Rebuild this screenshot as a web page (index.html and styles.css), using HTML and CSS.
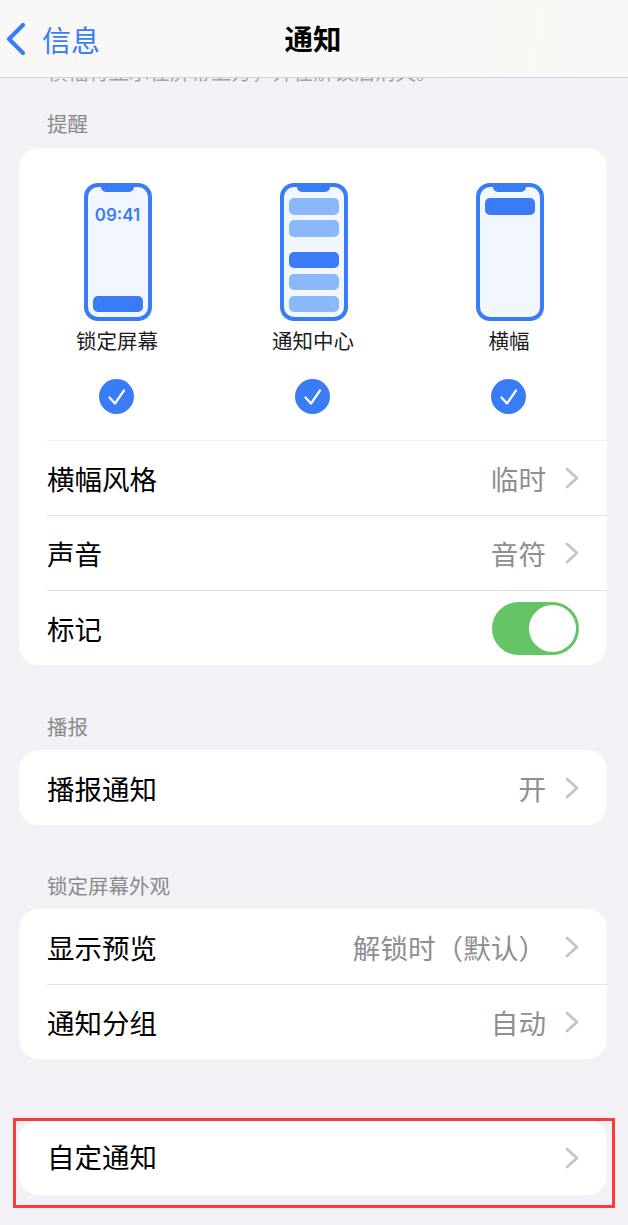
FILE: index.html
```html
<!DOCTYPE html>
<html lang="zh-CN">
<head>
    <meta charset="UTF-8">
    <meta name="viewport" content="width=device-width, initial-scale=1.0">
    <title>通知</title>
    <link rel="stylesheet" href="styles.css">
</head>
<body>
    <div class="screen">
        <header class="nav">
            <a class="nav-back">
                <svg class="back-icon" width="22" height="34" viewBox="0 0 22 34"><path d="M18 3 L4 17 L18 31" fill="none" stroke="#3a7cf6" stroke-width="4.2" stroke-linecap="round" stroke-linejoin="round"/></svg>
                <span>信息</span>
            </a>
            <h1>通知</h1>
        </header>
        <div class="clipped-note"><p>横幅将显示在屏幕上方，并在解锁后消失。</p></div>

        <h2 class="section-title first">提醒</h2>
        <section class="card">
            <div class="styles">
                <div class="style-item">
                    <div class="phone">
                        <span class="notch"></span>
                        <span class="clock">09:41</span>
                        <span class="bar bar-dark bar-bottom"></span>
                    </div>
                    <span class="style-name">锁定屏幕</span>
                    <span class="check"><svg width="20" height="18" viewBox="0 0 20 18"><path d="M2.5 9.5 L8 15.5 L17 2.5" fill="none" stroke="#fff" stroke-width="2.2" stroke-linecap="round" stroke-linejoin="round"/></svg></span>
                </div>
                <div class="style-item">
                    <div class="phone phone-list">
                        <span class="notch"></span>
                        <span class="bar bar-light"></span>
                        <span class="bar bar-light"></span>
                        <span class="bar bar-dark bar-gap"></span>
                        <span class="bar bar-light"></span>
                        <span class="bar bar-light"></span>
                    </div>
                    <span class="style-name">通知中心</span>
                    <span class="check"><svg width="20" height="18" viewBox="0 0 20 18"><path d="M2.5 9.5 L8 15.5 L17 2.5" fill="none" stroke="#fff" stroke-width="2.2" stroke-linecap="round" stroke-linejoin="round"/></svg></span>
                </div>
                <div class="style-item">
                    <div class="phone phone-list">
                        <span class="notch"></span>
                        <span class="bar bar-dark"></span>
                    </div>
                    <span class="style-name">横幅</span>
                    <span class="check"><svg width="20" height="18" viewBox="0 0 20 18"><path d="M2.5 9.5 L8 15.5 L17 2.5" fill="none" stroke="#fff" stroke-width="2.2" stroke-linecap="round" stroke-linejoin="round"/></svg></span>
                </div>
            </div>
            <div class="row row-soft">
                <span class="row-label">横幅风格</span>
                <span class="row-value">临时</span>
                <svg class="chevron" width="14" height="22" viewBox="0 0 14 22"><path d="M2 2 L12 11 L2 20" fill="none" stroke="#c4c4c7" stroke-width="2.8" stroke-linecap="round" stroke-linejoin="round"/></svg>
            </div>
            <div class="row">
                <span class="row-label">声音</span>
                <span class="row-value">音符</span>
                <svg class="chevron" width="14" height="22" viewBox="0 0 14 22"><path d="M2 2 L12 11 L2 20" fill="none" stroke="#c4c4c7" stroke-width="2.8" stroke-linecap="round" stroke-linejoin="round"/></svg>
            </div>
            <div class="row">
                <span class="row-label">标记</span>
                <span class="toggle"><span class="knob"></span></span>
            </div>
        </section>

        <h2 class="section-title">播报</h2>
        <section class="card">
            <div class="row row-plain">
                <span class="row-label">播报通知</span>
                <span class="row-value">开</span>
                <svg class="chevron" width="14" height="22" viewBox="0 0 14 22"><path d="M2 2 L12 11 L2 20" fill="none" stroke="#c4c4c7" stroke-width="2.8" stroke-linecap="round" stroke-linejoin="round"/></svg>
            </div>
        </section>

        <h2 class="section-title tight">锁定屏幕外观</h2>
        <section class="card">
            <div class="row row-plain">
                <span class="row-label">显示预览</span>
                <span class="row-value">解锁时（默认）</span>
                <svg class="chevron" width="14" height="22" viewBox="0 0 14 22"><path d="M2 2 L12 11 L2 20" fill="none" stroke="#c4c4c7" stroke-width="2.8" stroke-linecap="round" stroke-linejoin="round"/></svg>
            </div>
            <div class="row">
                <span class="row-label">通知分组</span>
                <span class="row-value">自动</span>
                <svg class="chevron" width="14" height="22" viewBox="0 0 14 22"><path d="M2 2 L12 11 L2 20" fill="none" stroke="#c4c4c7" stroke-width="2.8" stroke-linecap="round" stroke-linejoin="round"/></svg>
            </div>
        </section>

        <section class="card card-custom">
            <div class="row row-plain row-custom">
                <span class="row-label">自定通知</span>
                <svg class="chevron" width="14" height="22" viewBox="0 0 14 22"><path d="M2 2 L12 11 L2 20" fill="none" stroke="#c4c4c7" stroke-width="2.8" stroke-linecap="round" stroke-linejoin="round"/></svg>
            </div>
        </section>

        <div class="highlight"></div>
    </div>
</body>
</html>
```

FILE: styles.css
```css
* {
    box-sizing: border-box;
}
body {
    margin: 0;
    background-color: #f1f1f6;
    font-family: "Noto Sans CJK SC", "Liberation Sans", sans-serif;
}
.screen {
    position: relative;
    width: 628px;
    height: 1225px;
    overflow: hidden;
}
.nav {
    position: relative;
    height: 78px;
    padding: 0 2px 2px 0;
    display: flex;
    align-items: center;
    justify-content: center;
    background: linear-gradient(100deg, #f9f8f6 0%, #f8f8f8 55%, #f7faf5 85%, #f8f8f8 100%);
    border-bottom: 1px solid #d3d3d5;
}
.nav h1 {
    margin: 0;
    font-size: 28.5px;
    line-height: 40px;
    font-weight: 700;
    color: #000;
}
.nav-back {
    position: absolute;
    left: 5px;
    top: 22px;
    display: flex;
    align-items: center;
    gap: 15px;
    font-size: 29px;
    line-height: 34px;
    color: #3a7cf6;
}
.clipped-note {
    height: 4px;
    padding-left: 47px;
    overflow: hidden;
}
.clipped-note p {
    margin: -17px 0 0;
    font-size: 20.5px;
    line-height: 20px;
    white-space: nowrap;
    color: #a2a2a7;
}
.section-title {
    margin: 47px 0 0 47px;
    height: 28px;
    font-size: 20.5px;
    line-height: 28px;
    font-weight: 400;
    color: #8a8a8e;
}
.section-title.first {
    margin-top: 27px;
    margin-bottom: 11px;
}
.section-title.tight {
    margin-top: 46px;
}
.card {
    margin: 10px 21px 0 19px;
    background-color: #fff;
    border-radius: 20px;
    overflow: hidden;
}
.section-title.first + .card {
    margin-top: 0;
}
.card-custom {
    margin-top: 61px;
}
.styles {
    display: grid;
    grid-template-columns: repeat(3, 1fr);
    padding-top: 35px;
    height: 292px;
}
.style-item {
    display: flex;
    flex-direction: column;
    align-items: center;
}
.phone {
    position: relative;
    width: 68px;
    height: 138px;
    margin-left: 1px;
    border: 4px solid #3a7cf6;
    border-radius: 14px;
    background-color: #f2f7fe;
    display: flex;
    flex-direction: column;
    align-items: center;
}
.phone-list {
    padding-top: 11px;
    gap: 5.5px;
}
.notch {
    position: absolute;
    top: -1px;
    left: 13.5px;
    width: 33px;
    height: 6px;
    background-color: #3a7cf6;
    border-radius: 0 0 5px 5px;
}
.clock {
    margin-top: 17px;
    font-family: "Inter", "Liberation Sans", sans-serif;
    font-size: 17px;
    line-height: 22px;
    font-weight: 600;
    color: #3a7cf6;
}
.bar {
    width: 50px;
    height: 16.5px;
    flex: none;
    border-radius: 5px;
}
.bar-light {
    background-color: #8ab8f9;
}
.bar-dark {
    background-color: #3a7cf6;
}
.bar-gap {
    margin-top: 9.5px;
}
.bar-bottom {
    margin-top: auto;
    margin-bottom: 5px;
}
.style-name {
    margin-top: 4px;
    font-size: 20.5px;
    line-height: 30px;
    color: #1c1c1e;
}
.check {
    margin-top: 24px;
    margin-left: -1px;
    width: 35px;
    height: 35px;
    border-radius: 50%;
    background-color: #3a7cf6;
    display: flex;
    align-items: center;
    justify-content: center;
}
.row {
    display: flex;
    align-items: center;
    height: 75px;
    margin-left: 28px;
    padding-right: 28px;
    border-top: 1px solid #e1e1e3;
}
.row-soft {
    border-top-color: #f1f1f3;
}
.row-plain {
    border-top: 0;
}
.row-custom .row-label {
    margin-bottom: 3px;
}
.row-label {
    flex: 1;
    font-size: 27.5px;
    line-height: 38px;
    color: #000;
}
.row-value {
    font-size: 27.6px;
    line-height: 38px;
    color: #8e8e93;
}
.chevron {
    margin-left: 19px;
}
.toggle {
    display: flex;
    justify-content: flex-end;
    align-items: center;
    width: 87px;
    height: 53px;
    padding-right: 3px;
    border-radius: 27px;
    background-color: #65c466;
}
.knob {
    width: 47px;
    height: 47px;
    border-radius: 50%;
    background-color: #fff;
}
.highlight {
    position: absolute;
    left: 13px;
    top: 1118px;
    width: 602px;
    height: 90px;
    border: 3px solid #f83c3c;
}
```
